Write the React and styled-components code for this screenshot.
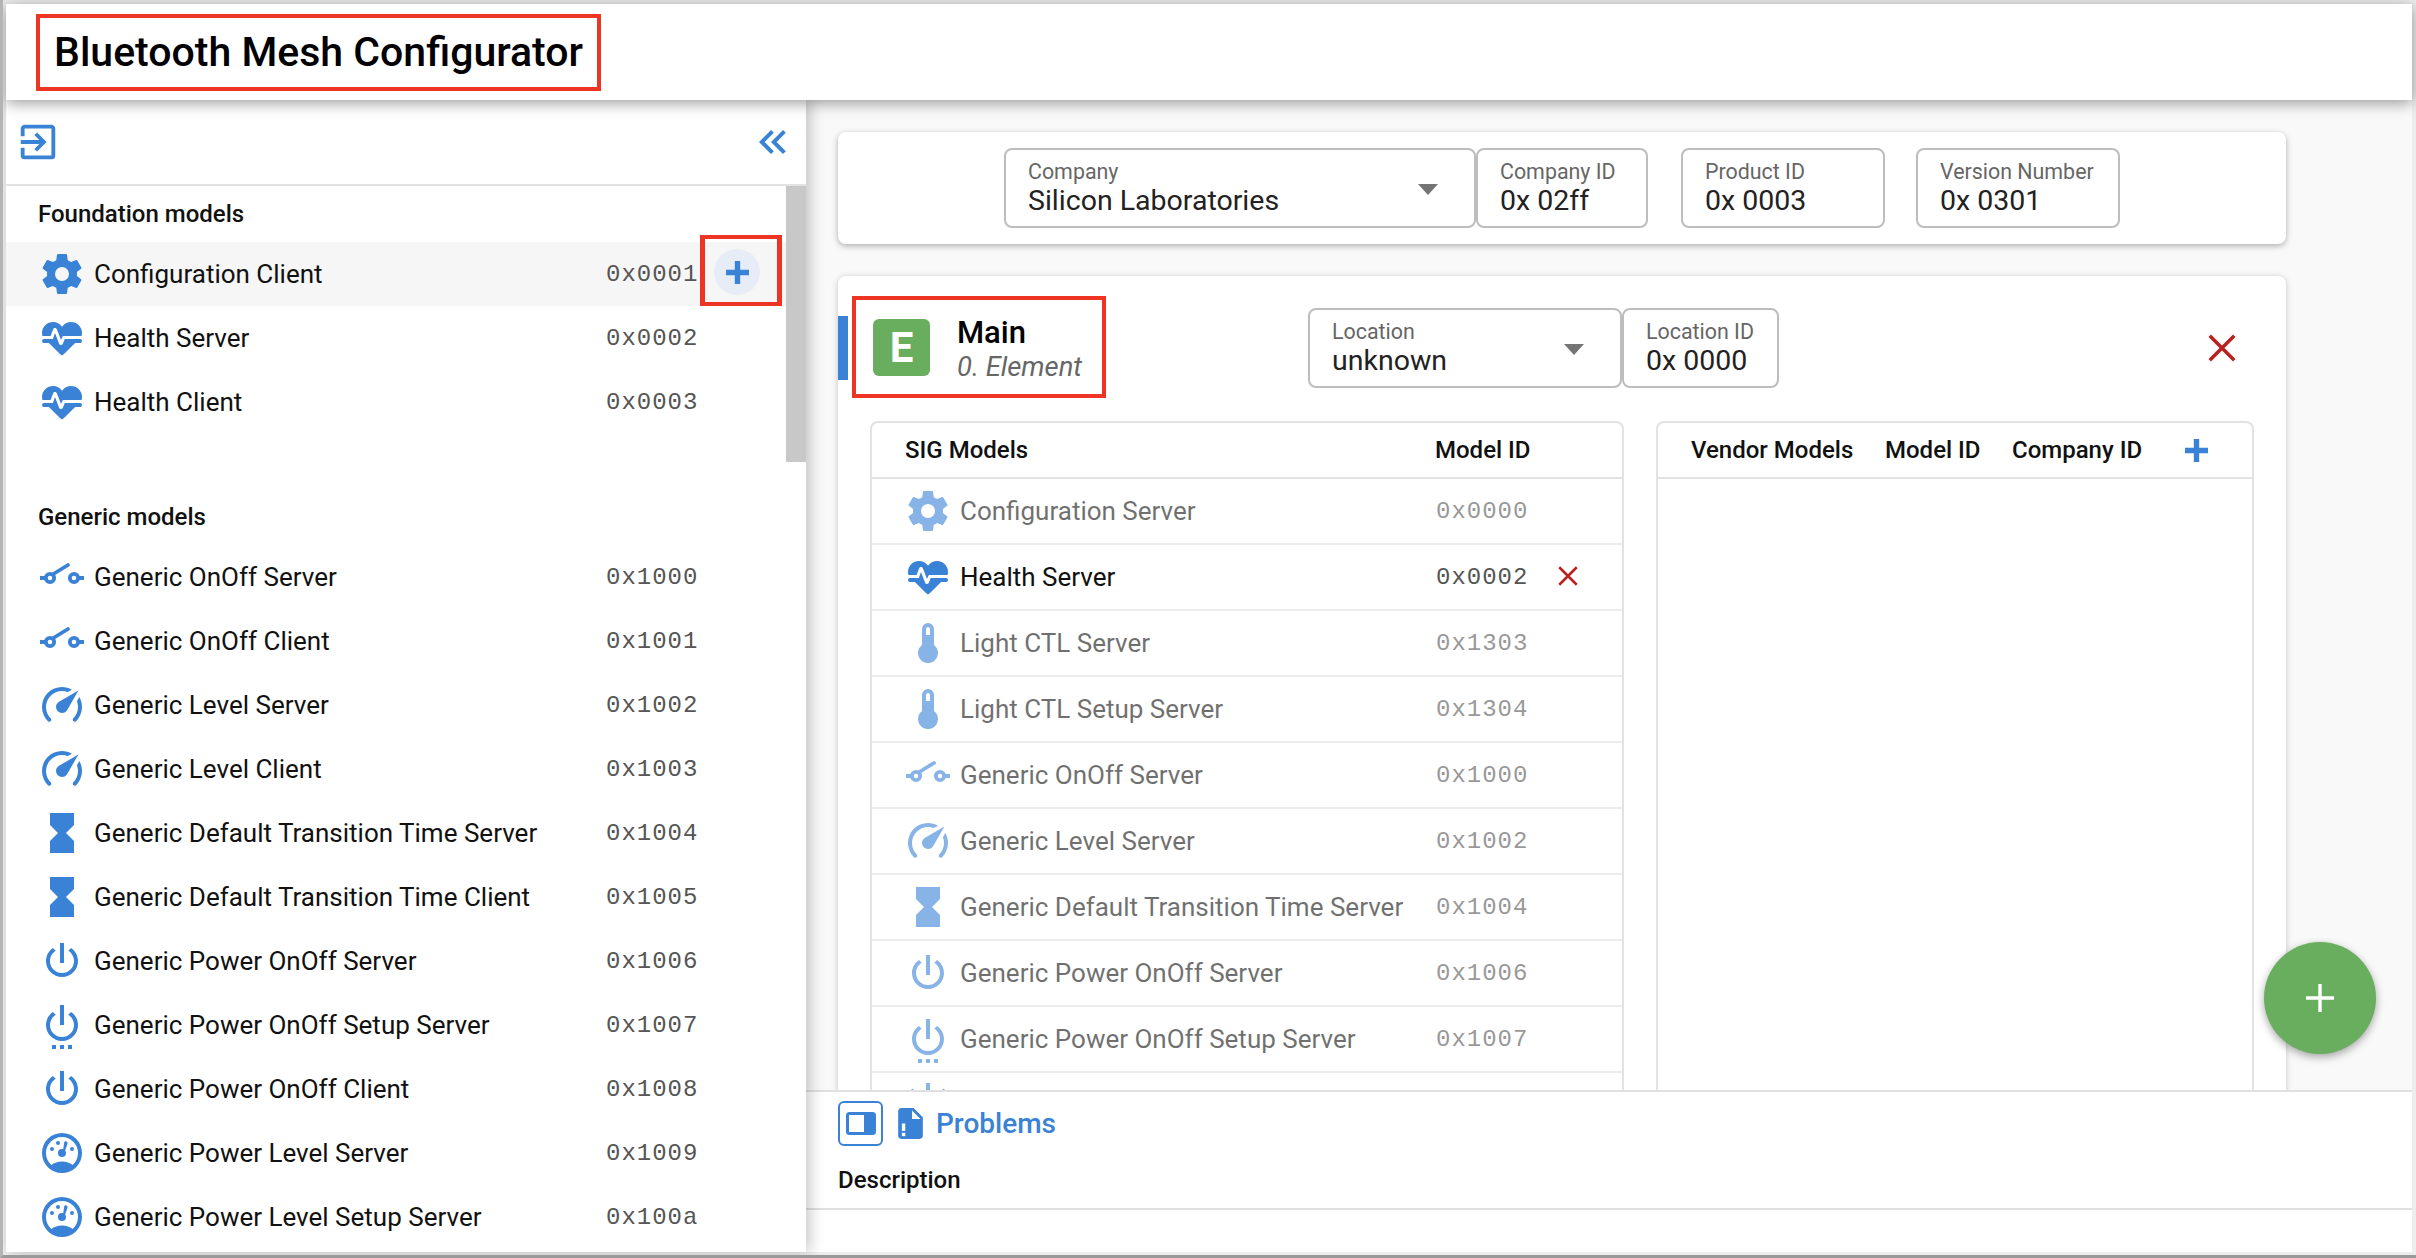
import React from "react";
import styled, { createGlobalStyle } from "styled-components";

const BLUE = "#3a82d6";
const RED_MARK = "#ee3524";

const paths = {
  cog: "M12,15.5A3.5,3.5 0 0,1 8.5,12A3.5,3.5 0 0,1 12,8.5A3.5,3.5 0 0,1 15.5,12A3.5,3.5 0 0,1 12,15.5M19.43,12.97C19.47,12.65 19.5,12.33 19.5,12C19.5,11.67 19.47,11.34 19.43,11L21.54,9.37C21.73,9.22 21.78,8.95 21.66,8.73L19.66,5.27C19.54,5.05 19.27,4.96 19.05,5.05L16.56,6.05C16.04,5.66 15.5,5.32 14.87,5.07L14.5,2.42C14.46,2.18 14.25,2 14,2H10C9.75,2 9.54,2.18 9.5,2.42L9.13,5.07C8.5,5.32 7.96,5.66 7.44,6.05L4.95,5.05C4.73,4.96 4.46,5.05 4.34,5.27L2.34,8.73C2.21,8.95 2.27,9.22 2.46,9.37L4.57,11C4.53,11.34 4.5,11.67 4.5,12C4.5,12.33 4.53,12.65 4.57,12.97L2.46,14.63C2.27,14.78 2.21,15.05 2.34,15.27L4.34,18.73C4.46,18.95 4.73,19.03 4.95,18.95L7.44,17.94C7.96,18.34 8.5,18.68 9.13,18.93L9.5,21.58C9.54,21.82 9.75,22 10,22H14C14.25,22 14.46,21.82 14.5,21.58L14.87,18.93C15.5,18.67 16.04,18.34 16.56,17.94L19.05,18.95C19.27,19.03 19.54,18.95 19.66,18.73L21.66,15.27C21.78,15.05 21.73,14.78 21.54,14.63L19.43,12.97Z",
  heart: "M7.5,4A5.5,5.5 0 0,0 2,9.5C2,10 2.09,10.5 2.22,11H6.3L7.57,7.63C7.87,6.83 9.05,6.75 9.43,7.63L11.5,13L12.09,11.58C12.22,11.25 12.57,11 13,11H21.78C21.91,10.5 22,10 22,9.5A5.5,5.5 0 0,0 16.5,4C14.64,4 13,4.93 12,6.34C11,4.93 9.36,4 7.5,4V4M3,12.5A1,1 0 0,0 2,13.5A1,1 0 0,0 3,14.5H5.44L11,20C12,20.9 12,20.9 13,20L18.56,14.5H21A1,1 0 0,0 22,13.5A1,1 0 0,0 21,12.5H13.4L12.47,14.8C12.07,15.81 10.92,15.67 10.55,14.83L8.5,9.5L7.43,12.5H3Z",
  level: "M12,16A3,3 0 0,1 9,13C9,11.88 9.61,10.9 10.5,10.39L20.21,4.77L14.68,14.35C14.18,15.33 13.17,16 12,16M12,3C13.81,3 15.5,3.5 16.97,4.32L14.87,5.53C14,5.19 13,5 12,5A8,8 0 0,0 4,13C4,15.21 4.89,17.21 6.34,18.65H6.35C6.74,19.04 6.74,19.67 6.35,20.06C5.96,20.45 5.32,20.45 4.93,20.07V20.07C3.12,18.26 2,15.76 2,13A10,10 0 0,1 12,3M22,13C22,15.76 20.88,18.26 19.07,20.07V20.07C18.68,20.45 18.05,20.45 17.66,20.06C17.27,19.67 17.27,19.04 17.66,18.65V18.65C19.11,17.2 20,15.2 20,13C20,12 19.81,11 19.46,10.1L20.67,8C21.5,9.5 22,11.18 22,13Z",
  sand: "M6,2V8L10,12L6,16V22H18V16L14,12L18,8V2H6Z",
  power: "M16.56,5.44L15.11,6.89C16.84,7.94 18,9.83 18,12A6,6 0 0,1 12,18A6,6 0 0,1 6,12C6,9.83 7.16,7.94 8.88,6.88L7.44,5.44C5.36,6.88 4,9.28 4,12A8,8 0 0,0 12,20A8,8 0 0,0 20,12C20,9.28 18.64,6.88 16.56,5.44M13,3H11V13H13",
  powerSetup: "M15,24H17V22H15M16.56,5.44L15.11,6.89C16.84,7.94 18,9.83 18,12A6,6 0 0,1 12,18A6,6 0 0,1 6,12C6,9.83 7.16,7.94 8.88,6.88L7.44,5.44C5.36,6.88 4,9.28 4,12A8,8 0 0,0 12,20A8,8 0 0,0 20,12C20,9.28 18.64,6.88 16.56,5.44M13,2H11V12H13M11,24H13V22H11M7,24H9V22H7V24Z",
  gauge: "M17.3,18C19,16.5 20,14.4 20,12A8,8 0 0,0 12,4A8,8 0 0,0 4,12C4,14.4 5,16.5 6.7,18C8,17 9.9,16.3 12,16.3C14.1,16.3 16,17 17.3,18M12,2A10,10 0 0,1 22,12A10,10 0 0,1 12,22A10,10 0 0,1 2,12A10,10 0 0,1 12,2M7,9A1,1 0 0,1 8,10A1,1 0 0,1 7,11A1,1 0 0,1 6,10A1,1 0 0,1 7,9M10,6A1,1 0 0,1 11,7A1,1 0 0,1 10,8A1,1 0 0,1 9,7A1,1 0 0,1 10,6M17,9A1,1 0 0,1 18,10A1,1 0 0,1 17,11A1,1 0 0,1 16,10A1,1 0 0,1 17,9M14.2,6.2C14.7,6.4 14.9,6.9 14.7,7.4L13.6,10.8C13.8,11.1 14,11.5 14,12A2,2 0 0,1 12,14A2,2 0 0,1 10,12A2,2 0 0,1 12,10C12.2,10 12.4,10 12.6,10.1L13.1,6.8C13.2,6.3 13.7,6 14.2,6.2Z",
  thermo: "M15,13V5A3,3 0 0,0 9,5V13A5,5 0 1,0 15,13M12,4A1,1 0 0,1 13,5V8H11V5A1,1 0 0,1 12,4Z",
  sun: "M11,1H13V5H11V1M4.2,3.8L7,6.6L5.6,8L2.8,5.2L4.2,3.8M19.8,3.8L21.2,5.2L18.4,8L17,6.6L19.8,3.8M12,7A6,6 0 0,1 18,13A6,6 0 0,1 6,13A6,6 0 0,1 12,7Z",
  enter: "M10.09,15.59L11.5,17L16.5,12L11.5,7L10.09,8.41L12.67,11H3V13H12.67L10.09,15.59M19,3H5C3.89,3 3,3.9 3,5V9H5V5H19V19H5V15H3V19A2,2 0 0,0 5,21H19A2,2 0 0,0 21,19V5C21,3.9 20.1,3 19,3Z",
  collapse: "M18.41,7.41L17,6L11,12L17,18L18.41,16.59L13.83,12L18.41,7.41M12.41,7.41L11,6L5,12L11,18L12.41,16.59L7.83,12L12.41,7.41Z",
  plus: "M9.2,0H14.8V9.2H24V14.8H14.8V24H9.2V14.8H0V9.2H9.2Z",
  file: "M14,2H6C4.9,2 4,2.9 4,4V20C4,21.1 4.9,22 6,22H18C19.1,22 20,21.1 20,20V8L14,2M13,3.5L18.5,9H13V3.5Z",
};

const Glyph = styled.svg`
  display: block;
  flex: none;
  width: ${(p) => p.$size || 48}px;
  height: ${(p) => p.$size || 48}px;
  fill: ${(p) => p.$color || BLUE};
`;

const Mdi = ({ name, size, color }) => (
  <Glyph viewBox="0 0 24 24" $size={size} $color={color}>
    <path d={paths[name]} />
  </Glyph>
);

// the on/off switch is not in any of the icon sets, so drawn by hand
const SwitchIcon = () => (
  <Glyph viewBox="0 0 48 48">
    <g fill="none" stroke={BLUE} strokeWidth="3.8">
      <path d="M2,25H8M40,25H46" />
      <circle cx="12" cy="25" r="4.2" />
      <circle cx="36" cy="25" r="4.2" />
      <path d="M14.5,21.5L30,12" strokeLinecap="round" />
    </g>
  </Glyph>
);

const ModelIcon = ({ type }) => {
  if (type === "switch") return <SwitchIcon />;
  return <Mdi name={type} />;
};

const CrossIcon = ({ size }) => (
  <Glyph viewBox="0 0 24 24" $size={size}>
    <path d="M1.5,1.5L22.5,22.5M22.5,1.5L1.5,22.5" fill="none" stroke="#b9201f" strokeWidth="3" />
  </Glyph>
);

const GlobalStyle = createGlobalStyle`
  html, body {
    margin: 0;
    padding: 0;
    background: #fff;
    font-family: Roboto, "Liberation Sans", sans-serif;
    color: #111;
  }
  * { box-sizing: border-box; }
`;

const Frame = styled.div`
  width: 2416px;
  height: 1258px;
  display: flex;
  flex-direction: column;
  overflow: hidden;
  position: relative;
  background: #ededed;
  border-left: 3px solid #b4b4b4;
  border-bottom: 3px solid #999;
  padding: 4px 4px 3px 3px;
`;

const TopBar = styled.header`
  flex: none;
  height: 96px;
  display: flex;
  align-items: center;
  padding-left: 30px;
  background: #fff;
  position: relative;
  z-index: 3;
  box-shadow: 0 3px 14px rgba(0, 0, 0, 0.4);
`;

const Title = styled.h1`
  margin: 0;
  height: 77px;
  padding: 0 14px;
  display: flex;
  align-items: center;
  border: 4px solid ${RED_MARK};
  font-size: 41px;
  font-weight: 500;
  color: #000;
  white-space: nowrap;
`;

const Body = styled.div`
  flex: 1;
  min-height: 0;
  display: flex;
  background: #f9f9f9;
`;

const Sidebar = styled.aside`
  flex: none;
  width: 800px;
  padding-top: 20px;
  display: flex;
  flex-direction: column;
  background: #fff;
  position: relative;
  z-index: 2;
  box-shadow: 4px 0 14px rgba(0, 0, 0, 0.22);
`;

const SideTools = styled.div`
  flex: none;
  height: 66px;
  display: flex;
  align-items: center;
  justify-content: space-between;
  padding: 0 9px 20px 9px;
  border-bottom: 2px solid #e2e2e2;
`;

const SideScroll = styled.div`
  flex: 1;
  min-height: 0;
  display: flex;
`;

const ModelList = styled.div`
  flex: 1;
  min-width: 0;
  overflow: hidden;
`;

const ScrollTrack = styled.div`
  flex: none;
  width: 20px;
`;

const ScrollThumb = styled.div`
  height: 276px;
  background: #c8c8c8;
`;

const GroupTitle = styled.div`
  height: 56px;
  margin-top: ${(p) => p.$gap || 0}px;
  padding-left: 32px;
  display: flex;
  align-items: center;
  font-size: 24px;
  font-weight: 500;
  color: #111;
`;

const ModelRow = styled.div`
  height: 64px;
  padding-left: 32px;
  display: grid;
  grid-template-columns: 48px 504px 92px 84px;
  column-gap: 8px;
  align-items: center;
  background: ${(p) => (p.$hover ? "#f6f6f6" : "transparent")};
`;

const ModelName = styled.span`
  font-size: 26px;
  white-space: nowrap;
`;

const ModelId = styled.span`
  font-family: "Liberation Mono", monospace;
  font-size: 24px;
  letter-spacing: 1px;
  color: #555;
`;

const AddMark = styled.div`
  width: 82px;
  height: 71px;
  margin-left: -6px;
  margin-top: -7px;
  padding: 10px 8px 0 0;
  border-style: solid;
  border-color: ${RED_MARK};
  border-width: 4px 5px;
  display: flex;
  align-items: flex-start;
  justify-content: center;
`;

const AddRound = styled.button`
  width: 46px;
  height: 46px;
  padding: 0;
  border: 0;
  border-radius: 50%;
  background: #e7edf6;
  display: flex;
  align-items: center;
  justify-content: center;
`;

const Main = styled.main`
  flex: 1;
  min-width: 0;
  display: flex;
  flex-direction: column;
  position: relative;
`;

const Content = styled.div`
  flex: 1;
  min-height: 0;
  overflow: hidden;
  padding: 32px 126px 0 32px;
`;

const Card = styled.section`
  background: #fff;
  border-radius: 8px;
  box-shadow: 0 2px 6px rgba(0, 0, 0, 0.3);
  position: relative;
`;

const DeviceCard = styled(Card)`
  height: 112px;
  padding: 16px 0 0 166px;
  display: flex;
  align-items: flex-start;
`;

const ElementCard = styled(Card)`
  margin-top: 32px;
  padding: 20px 34px 0 32px;
  box-shadow: 0 1px 6px rgba(0, 0, 0, 0.22);
`;

const Field = styled.div`
  flex: none;
  width: ${(p) => p.$width}px;
  height: 80px;
  margin-left: ${(p) => p.$gap || 0}px;
  margin-top: ${(p) => p.$drop || 0}px;
  padding: 9px 22px 0;
  border: 2px solid #bdbdbd;
  border-radius: 8px;
  position: relative;
`;

const FieldLabel = styled.div`
  font-size: 21.4px;
  line-height: 26px;
  color: #666;
  white-space: nowrap;
`;

const FieldValue = styled.div`
  font-size: 28.5px;
  line-height: 32px;
  color: #222;
  white-space: nowrap;
`;

const SelectArrow = styled.span`
  position: absolute;
  right: 36px;
  top: 34px;
  width: 0;
  height: 0;
  border-left: 10px solid transparent;
  border-right: 10px solid transparent;
  border-top: 11px solid #757575;
`;

const ElementHead = styled.div`
  display: flex;
  align-items: center;
  margin-left: -18px;
`;

const ActiveBar = styled.span`
  position: absolute;
  left: 0;
  top: 40px;
  width: 10px;
  height: 64px;
  background: ${BLUE};
`;

const ElementMark = styled.div`
  flex: none;
  width: 254px;
  height: 102px;
  padding-left: 17px;
  display: flex;
  align-items: center;
  gap: 27px;
  border: 4px solid ${RED_MARK};
`;

const ElementBadge = styled.div`
  flex: none;
  width: 57px;
  height: 57px;
  border-radius: 6px;
  background: #69ad5e;
  color: #fff;
  font-size: 42px;
  font-weight: 700;
  display: flex;
  align-items: center;
  justify-content: center;
`;

const ElementName = styled.div`
  margin-top: 4px;
  font-size: 31px;
  font-weight: 500;
  line-height: 36px;
  color: #000;
`;

const ElementIndex = styled.div`
  font-size: 27.4px;
  font-style: italic;
  line-height: 32px;
  color: #666;
  white-space: nowrap;
`;

const DeleteElement = styled.div`
  margin-left: auto;
  margin-right: 16px;
  margin-top: 2px;
`;

const Tables = styled.div`
  margin-top: 23px;
  display: flex;
  gap: 32px;
`;

const Table = styled.div`
  flex: none;
  width: ${(p) => p.$width}px;
  border: 2px solid #e2e2e2;
  border-bottom: 0;
  border-radius: 8px 8px 0 0;
`;

const TableHead = styled.div`
  height: 56px;
  display: grid;
  grid-template-columns: ${(p) => p.$columns};
  align-items: center;
  padding-left: 33px;
  border-bottom: 2px solid #e2e2e2;
  font-size: 24px;
  font-weight: 500;
  color: #111;
  white-space: nowrap;
`;

const SigRow = styled.div`
  height: 66px;
  padding-left: 32px;
  display: grid;
  grid-template-columns: 48px 468px 92px 20px;
  column-gap: 8px;
  align-items: center;
  border-bottom: 2px solid #ececec;
  > * {
    opacity: ${(p) => (p.$used ? 1 : 0.6)};
  }
`;

const RowDelete = styled.div`
  margin-left: 22px;
  margin-top: -2px;
`;

const ProblemsPanel = styled.div`
  flex: none;
  height: 162px;
  border-top: 2px solid #e0e0e0;
  background: #fff;
  padding-top: 8px;
`;

const ProblemsTabs = styled.div`
  height: 46px;
  padding-left: 32px;
  display: flex;
  align-items: center;
`;

const PanelToggle = styled.button`
  width: 45px;
  height: 45px;
  padding: 0;
  margin-right: 9px;
  border: 2px solid ${BLUE};
  border-radius: 6px;
  background: #fff;
  display: flex;
  align-items: center;
  justify-content: center;
`;

const ProblemsTitle = styled.span`
  margin-left: 7px;
  font-size: 28px;
  font-weight: 500;
  color: ${BLUE};
`;

const ProblemsHead = styled.div`
  height: 62px;
  margin-top: 2px;
  padding: 4px 0 0 32px;
  display: flex;
  align-items: center;
  border-bottom: 2px solid #e0e0e0;
  font-size: 24px;
  font-weight: 500;
  color: #111;
`;

const Fab = styled.button`
  position: absolute;
  left: 1458px;
  top: 842px;
  width: 112px;
  height: 112px;
  padding: 0;
  border: 0;
  border-radius: 50%;
  background: #69ad5e;
  box-shadow: 0 3px 8px rgba(0, 0, 0, 0.35);
  display: flex;
  align-items: center;
  justify-content: center;
`;

const foundation = [
  { icon: "cog", name: "Configuration Client", id: "0x0001", hover: true },
  { icon: "heart", name: "Health Server", id: "0x0002" },
  { icon: "heart", name: "Health Client", id: "0x0003" },
];

const generic = [
  { icon: "switch", name: "Generic OnOff Server", id: "0x1000" },
  { icon: "switch", name: "Generic OnOff Client", id: "0x1001" },
  { icon: "level", name: "Generic Level Server", id: "0x1002" },
  { icon: "level", name: "Generic Level Client", id: "0x1003" },
  { icon: "sand", name: "Generic Default Transition Time Server", id: "0x1004" },
  { icon: "sand", name: "Generic Default Transition Time Client", id: "0x1005" },
  { icon: "power", name: "Generic Power OnOff Server", id: "0x1006" },
  { icon: "powerSetup", name: "Generic Power OnOff Setup Server", id: "0x1007" },
  { icon: "power", name: "Generic Power OnOff Client", id: "0x1008" },
  { icon: "gauge", name: "Generic Power Level Server", id: "0x1009" },
  { icon: "gauge", name: "Generic Power Level Setup Server", id: "0x100a" },
];

const sigModels = [
  { icon: "cog", name: "Configuration Server", id: "0x0000" },
  { icon: "heart", name: "Health Server", id: "0x0002", used: true },
  { icon: "thermo", name: "Light CTL Server", id: "0x1303" },
  { icon: "thermo", name: "Light CTL Setup Server", id: "0x1304" },
  { icon: "switch", name: "Generic OnOff Server", id: "0x1000" },
  { icon: "level", name: "Generic Level Server", id: "0x1002" },
  { icon: "sand", name: "Generic Default Transition Time Server", id: "0x1004" },
  { icon: "power", name: "Generic Power OnOff Server", id: "0x1006" },
  { icon: "powerSetup", name: "Generic Power OnOff Setup Server", id: "0x1007" },
];

const renderModel = (m) => (
  <ModelRow key={m.id} $hover={m.hover}>
    <ModelIcon type={m.icon} />
    <ModelName>{m.name}</ModelName>
    <ModelId>{m.id}</ModelId>
    {m.hover && (
      <AddMark>
        <AddRound>
          <Mdi name="plus" size={23} />
        </AddRound>
      </AddMark>
    )}
  </ModelRow>
);

const App = () => (
  <Frame>
    <GlobalStyle />
    <TopBar>
      <Title>Bluetooth Mesh Configurator</Title>
    </TopBar>
    <Body>
      <Sidebar>
        <SideTools>
          <Mdi name="enter" size={46} />
          <Mdi name="collapse" />
        </SideTools>
        <SideScroll>
          <ModelList>
            <GroupTitle>Foundation models</GroupTitle>
            {foundation.map(renderModel)}
            <GroupTitle $gap={55}>Generic models</GroupTitle>
            {generic.map(renderModel)}
          </ModelList>
          <ScrollTrack>
            <ScrollThumb />
          </ScrollTrack>
        </SideScroll>
      </Sidebar>
      <Main>
        <Content>
          <DeviceCard>
            <Field $width={472}>
              <FieldLabel>Company</FieldLabel>
              <FieldValue>Silicon Laboratories</FieldValue>
              <SelectArrow />
            </Field>
            <Field $width={172}>
              <FieldLabel>Company ID</FieldLabel>
              <FieldValue>0x 02ff</FieldValue>
            </Field>
            <Field $width={204} $gap={33}>
              <FieldLabel>Product ID</FieldLabel>
              <FieldValue>0x 0003</FieldValue>
            </Field>
            <Field $width={204} $gap={31}>
              <FieldLabel>Version Number</FieldLabel>
              <FieldValue>0x 0301</FieldValue>
            </Field>
          </DeviceCard>
          <ElementCard>
            <ActiveBar />
            <ElementHead>
              <ElementMark>
                <ElementBadge>E</ElementBadge>
                <div>
                  <ElementName>Main</ElementName>
                  <ElementIndex>0. Element</ElementIndex>
                </div>
              </ElementMark>
              <Field $width={314} $gap={202} $drop={2}>
                <FieldLabel>Location</FieldLabel>
                <FieldValue>unknown</FieldValue>
                <SelectArrow />
              </Field>
              <Field $width={157} $drop={2}>
                <FieldLabel>Location ID</FieldLabel>
                <FieldValue>0x 0000</FieldValue>
              </Field>
              <DeleteElement>
                <CrossIcon size={28} />
              </DeleteElement>
            </ElementHead>
            <Tables>
              <Table $width={754}>
                <TableHead $columns="530px 1fr">
                  <span>SIG Models</span>
                  <span>Model ID</span>
                </TableHead>
                {sigModels.map((m) => (
                  <SigRow key={m.id} $used={m.used}>
                    <ModelIcon type={m.icon} />
                    <ModelName>{m.name}</ModelName>
                    <ModelId>{m.id}</ModelId>
                    {m.used && (
                      <RowDelete>
                        <CrossIcon size={20} />
                      </RowDelete>
                    )}
                  </SigRow>
                ))}
                <SigRow>
                  <Mdi name="sun" />
                </SigRow>
              </Table>
              <Table $width={598}>
                <TableHead $columns="194px 127px 173px auto">
                  <span>Vendor Models</span>
                  <span>Model ID</span>
                  <span>Company ID</span>
                  <Mdi name="plus" size={23} />
                </TableHead>
              </Table>
            </Tables>
          </ElementCard>
        </Content>
        <ProblemsPanel>
          <ProblemsTabs>
            <PanelToggle>
              <svg width="30" height="23" viewBox="0 0 30 23">
                <rect x="1.5" y="1.5" width="27" height="20" rx="2" fill="#fff" stroke={BLUE} strokeWidth="3" />
                <rect x="18" y="2" width="10" height="19" fill={BLUE} />
              </svg>
            </PanelToggle>
            <Glyph viewBox="0 0 24 24" $size={37}>
              <path d={paths.file} />
              <rect x="6.4" y="12" width="2.2" height="4.8" fill="#fff" />
              <rect x="6.4" y="18" width="2.2" height="2.2" fill="#fff" />
            </Glyph>
            <ProblemsTitle>Problems</ProblemsTitle>
          </ProblemsTabs>
          <ProblemsHead>Description</ProblemsHead>
        </ProblemsPanel>
        <Fab>
          <svg width="28" height="28" viewBox="0 0 28 28">
            <path d="M12.3,0h3.4v12.3H28v3.4H15.7V28h-3.4V15.7H0v-3.4h12.3z" fill="#fff" />
          </svg>
        </Fab>
      </Main>
    </Body>
  </Frame>
);

export default App;
